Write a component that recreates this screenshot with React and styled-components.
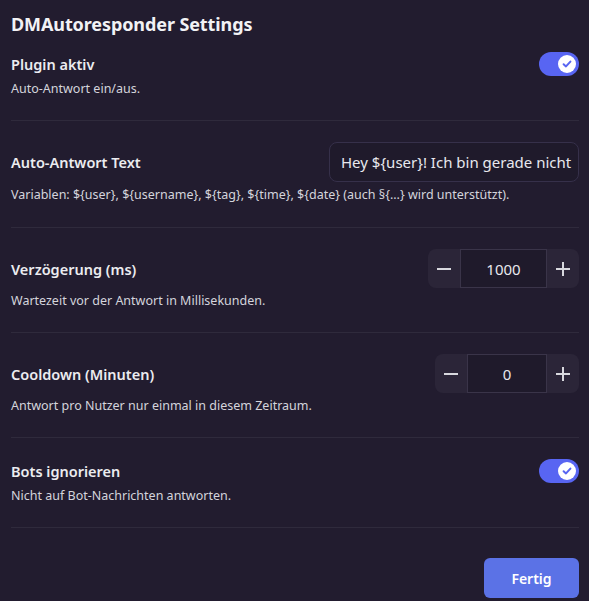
import React from 'react';
import styled, { createGlobalStyle } from 'styled-components';

const GlobalStyle = createGlobalStyle`
  html, body {
    margin: 0;
    padding: 0;
    background: #221c2f;
  }
  * {
    box-sizing: border-box;
  }
`;

const Modal = styled.div`
  width: 589px;
  height: 601px;
  background: #221c2f;
  padding: 12px 10px 0 11px;
  font-family: 'Noto Sans', 'Open Sans', sans-serif;
  color: #dcdce2;
`;

const Title = styled.h2`
  margin: 0;
  font-size: 18px;
  line-height: 24px;
  font-weight: 700;
  letter-spacing: -0.1px;
  color: #f2f2f5;
`;

const Section = styled.div`
  padding: ${(p) => (p.first ? '16px' : '21px')} 0 ${(p) => (p.tall ? '24px' : '23px')};
  border-bottom: 1px solid #2f2a3c;
`;

const Row = styled.div`
  display: flex;
  align-items: center;
  justify-content: space-between;
`;

const Label = styled.div`
  font-size: 14.5px;
  font-weight: 600;
  color: #ececf0;
`;

const Description = styled.div`
  margin-top: 5px;
  font-size: 12.5px;
  line-height: 16px;
  color: #d4d4dc;
`;

const SwitchTrack = styled.div`
  width: 40px;
  height: 24px;
  border-radius: 12px;
  background: #5865f2;
  display: flex;
  align-items: center;
  justify-content: flex-end;
  padding-right: 3px;
`;

const Knob = styled.div`
  width: 18px;
  height: 18px;
  border-radius: 50%;
  background: #ffffff;
  display: flex;
  align-items: center;
  justify-content: center;
`;

const TextInput = styled.input`
  width: 250px;
  height: 40px;
  border-radius: 8px;
  border: 1px solid #36304a;
  background: #1f1a2b;
  color: #e8e8ee;
  font-family: inherit;
  font-size: 15px;
  padding: 0 4px 0 11px;
  outline: none;
`;

const Stepper = styled.div`
  display: flex;
  height: 39px;
  border-radius: 8px;
  background: #2b2538;
  overflow: hidden;
`;

const StepButton = styled.div`
  width: 32px;
  display: flex;
  align-items: center;
  justify-content: center;
`;

const StepValue = styled.div`
  width: ${(p) => p.width}px;
  display: flex;
  align-items: center;
  justify-content: center;
  background: #1f1a2b;
  border: 1px solid #3a3449;
  font-size: 15px;
  color: #e8e8ee;
`;

const Footer = styled.div`
  display: flex;
  justify-content: flex-end;
  padding-top: 30px;
`;

const DoneButton = styled.button`
  width: 95px;
  height: 40px;
  border: none;
  border-radius: 6px;
  background: #5b72e6;
  color: #ffffff;
  font-family: inherit;
  font-size: 14px;
  font-weight: 600;
`;

const Toggle = () => (
  <SwitchTrack>
    <Knob>
      <svg width="12" height="12" viewBox="0 0 12 12">
        <path d="M2.6 6.2 L5 8.4 L9.4 3.6" fill="none" stroke="#5865f2" strokeWidth="2" strokeLinecap="round" strokeLinejoin="round" />
      </svg>
    </Knob>
  </SwitchTrack>
);

const Minus = () => (
  <svg width="16" height="16" viewBox="0 0 16 16">
    <path d="M1 8 H15" stroke="#d8d8de" strokeWidth="2" />
  </svg>
);

const Plus = () => (
  <svg width="16" height="16" viewBox="0 0 16 16">
    <path d="M1 8 H15 M8 1 V15" stroke="#d8d8de" strokeWidth="2" />
  </svg>
);

const NumberStepper = ({ value, width }) => (
  <Stepper>
    <StepButton><Minus /></StepButton>
    <StepValue width={width}>{value}</StepValue>
    <StepButton><Plus /></StepButton>
  </Stepper>
);

export default function App() {
  return (
    <>
      <GlobalStyle />
      <Modal>
        <Title>DMAutoresponder Settings</Title>

        <Section first>
          <Row>
            <Label>Plugin aktiv</Label>
            <Toggle />
          </Row>
          <Description>Auto-Antwort ein/aus.</Description>
        </Section>

        <Section tall>
          <Row>
            <Label>Auto-Antwort Text</Label>
            <TextInput readOnly value="Hey ${user}! Ich bin gerade nicht da und melde mich später." />
          </Row>
          <Description>
            Variablen: ${'{user}'}, ${'{username}'}, ${'{tag}'}, ${'{time}'}, ${'{date}'} (auch §{'{...}'} wird unterstützt).
          </Description>
        </Section>

        <Section>
          <Row>
            <Label>Verzögerung (ms)</Label>
            <NumberStepper value="1000" width={87} />
          </Row>
          <Description>Wartezeit vor der Antwort in Millisekunden.</Description>
        </Section>

        <Section>
          <Row>
            <Label>Cooldown (Minuten)</Label>
            <NumberStepper value="0" width={80} />
          </Row>
          <Description>Antwort pro Nutzer nur einmal in diesem Zeitraum.</Description>
        </Section>

        <Section>
          <Row>
            <Label>Bots ignorieren</Label>
            <Toggle />
          </Row>
          <Description>Nicht auf Bot-Nachrichten antworten.</Description>
        </Section>

        <Footer>
          <DoneButton>Fertig</DoneButton>
        </Footer>
      </Modal>
    </>
  );
}
